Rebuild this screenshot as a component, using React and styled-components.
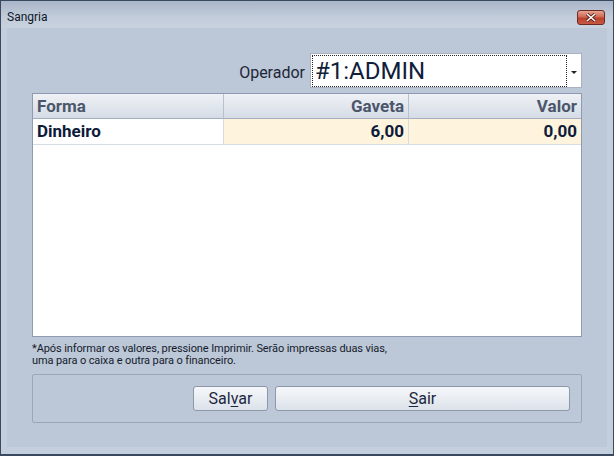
import React from 'react';
import styled, { createGlobalStyle } from 'styled-components';

const GlobalStyle = createGlobalStyle`
  html, body {
    margin: 0;
    padding: 0;
    background: #c3cedc;
  }
  body {
    font-family: Roboto, "Open Sans", "DejaVu Sans", sans-serif;
  }
`;

const Window = styled.div`
  box-sizing: border-box;
  width: 614px;
  height: 456px;
  border: 1px solid #3a4960;
  border-bottom-width: 2px;
  background: #c4cfdd;
  display: flex;
  flex-direction: column;
`;

const TitleBar = styled.div`
  box-sizing: border-box;
  height: 27px;
  padding: 5px 8px 0 6px;
  display: flex;
  align-items: center;
  justify-content: space-between;
  background: linear-gradient(#a9b6c9, #c2ccda 60%, #c8d2df);
`;

const Title = styled.span`
  font-size: 12px;
  color: #101828;
`;

const CloseButton = styled.div`
  box-sizing: border-box;
  width: 28px;
  height: 15px;
  border: 1px solid #6e2a20;
  border-radius: 3px;
  background: linear-gradient(#e6a393, #cf6a55 45%, #b9412c 55%, #c85a44);
  display: flex;
  align-items: center;
  justify-content: center;
`;

const Client = styled.div`
  flex: 1;
  margin: 0 6px 7px 6px;
  padding: 25px 25px 24px 25px;
  background: #bcc7d7;
  display: flex;
  flex-direction: column;
`;

const OperatorRow = styled.div`
  display: flex;
  justify-content: flex-end;
  align-items: center;
  gap: 5px;
  height: 35px;
`;

const Label = styled.span`
  font-size: 16px;
  color: #1c2638;
  padding-top: 3px;
`;

const Combo = styled.div`
  box-sizing: border-box;
  width: 272px;
  height: 35px;
  border: 1px solid #a8b2c1;
  background: #fff;
  display: flex;
  align-items: center;
  padding: 1px 4px 0 1px;
  gap: 4px;
`;

const ComboValue = styled.div`
  flex: 1;
  box-sizing: border-box;
  height: 32px;
  border: 1px dotted #222;
  font-size: 24px;
  line-height: 30px;
  padding-left: 2px;
  color: #10203a;
`;

const Arrow = styled.span`
  width: 0;
  height: 0;
  border-left: 3px solid transparent;
  border-right: 3px solid transparent;
  border-top: 3px solid #222;
  margin-top: 2px;
`;

const Grid = styled.div`
  box-sizing: border-box;
  margin-top: 5px;
  height: 244px;
  border: 1px solid #8e9bb0;
  background: #fff;
  display: grid;
  grid-template-columns: 191px 185px 1fr;
  grid-auto-rows: min-content;
`;

const HeadCell = styled.div`
  box-sizing: border-box;
  height: 25px;
  padding: 0 4px;
  font-size: 17px;
  font-weight: bold;
  line-height: 24px;
  color: #4b566b;
  text-align: ${(p) => (p.$right ? 'right' : 'left')};
  background: linear-gradient(#eef1f5, #e2e7ee 50%, #d6dce6);
  border-bottom: 1px solid #a5afbf;
  border-right: ${(p) => (p.$last ? 'none' : '1px solid #b7c0ce')};
`;

const Cell = styled.div`
  box-sizing: border-box;
  height: 26px;
  padding: 0 4px;
  font-size: 17px;
  font-weight: bold;
  line-height: 25px;
  color: #0d1b3a;
  text-align: ${(p) => (p.$right ? 'right' : 'left')};
  background: ${(p) => (p.$edit ? '#fef4de' : '#fff')};
  border-bottom: 1px solid #d6dce4;
  border-right: ${(p) => (p.$last ? 'none' : '1px solid #d6dce4')};
`;

const Note = styled.p`
  margin: 6px 0 0 0;
  font-size: 11px;
  line-height: 12px;
  letter-spacing: -0.1px;
  color: #141c2c;
`;

const ButtonPanel = styled.div`
  box-sizing: border-box;
  margin-top: 7px;
  height: 49px;
  border: 1px solid #9ba6b6;
  border-radius: 2px;
  padding: 0 11px 0 0;
  display: flex;
  justify-content: flex-end;
  align-items: center;
  gap: 7px;
`;

const Button = styled.button`
  box-sizing: border-box;
  width: ${(p) => p.$width}px;
  height: 25px;
  padding: 0;
  border: 1px solid #8d99ab;
  border-radius: 3px;
  background: linear-gradient(#f5f7fa, #e9edf2 50%, #dce2ea);
  font-family: inherit;
  font-size: 16px;
  color: #1c2840;
  u {
    text-decoration-thickness: 1px;
    text-underline-offset: 2px;
  }
`;

const rows = [{ forma: 'Dinheiro', gaveta: '6,00', valor: '0,00' }];

export default function App() {
  return (
    <>
      <GlobalStyle />
      <Window>
        <TitleBar>
          <Title>Sangria</Title>
          <CloseButton>
            <svg width="12" height="9" viewBox="0 0 12 9">
              <path d="M2 1 L10 8 M10 1 L2 8" stroke="#5a1e16" strokeWidth="3.2" />
              <path d="M2 1 L10 8 M10 1 L2 8" stroke="#fff" strokeWidth="1.6" />
            </svg>
          </CloseButton>
        </TitleBar>
        <Client>
          <OperatorRow>
            <Label>Operador</Label>
            <Combo>
              <ComboValue>#1:ADMIN</ComboValue>
              <Arrow />
            </Combo>
          </OperatorRow>
          <Grid>
            <HeadCell>Forma</HeadCell>
            <HeadCell $right>Gaveta</HeadCell>
            <HeadCell $right $last>Valor</HeadCell>
            {rows.map((r) => (
              <React.Fragment key={r.forma}>
                <Cell>{r.forma}</Cell>
                <Cell $right $edit>{r.gaveta}</Cell>
                <Cell $right $edit $last>{r.valor}</Cell>
              </React.Fragment>
            ))}
          </Grid>
          <Note>
            *Após informar os valores, pressione Imprimir. Serão impressas duas vias,
            <br />
            uma para o caixa e outra para o financeiro.
          </Note>
          <ButtonPanel>
            <Button $width={75}>Sal<u>v</u>ar</Button>
            <Button $width={295}><u>S</u>air</Button>
          </ButtonPanel>
        </Client>
      </Window>
    </>
  );
}
